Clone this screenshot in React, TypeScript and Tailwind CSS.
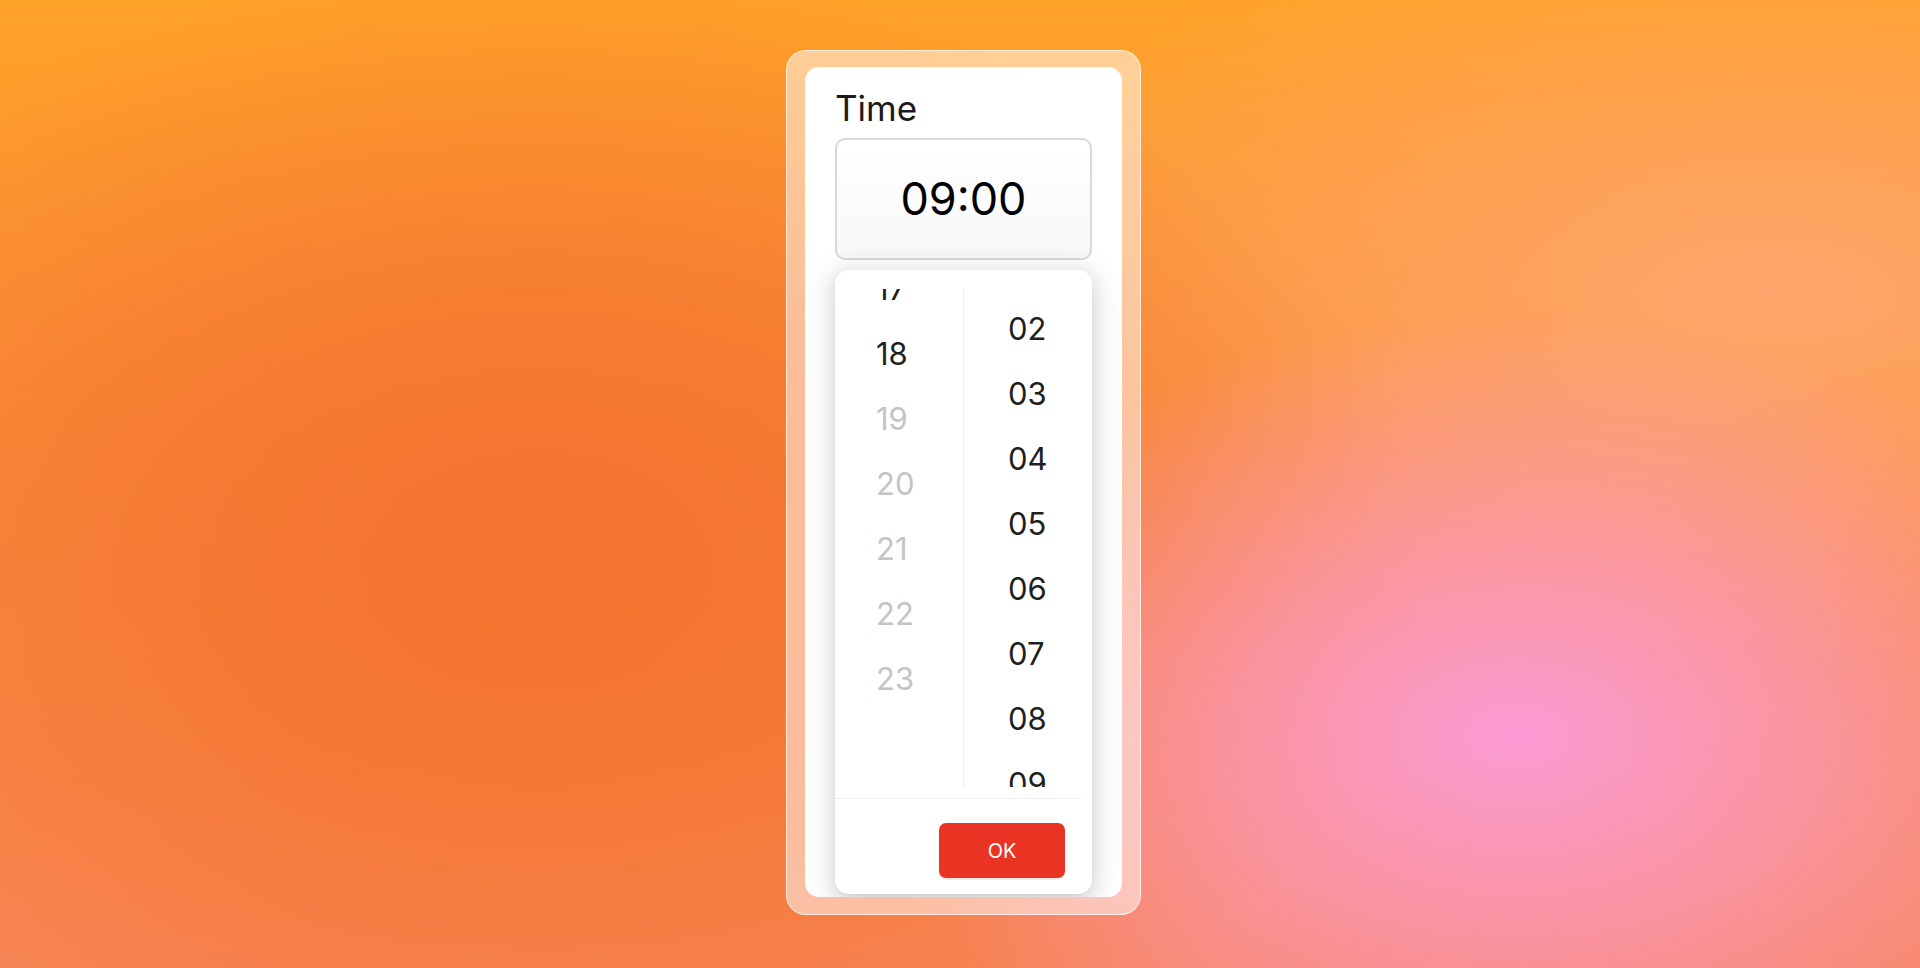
import { useLayoutEffect, useRef } from "react";

const HOURS = Array.from({ length: 24 }, (_, i) => String(i).padStart(2, "0"));
const MINUTES = Array.from({ length: 60 }, (_, i) => String(i).padStart(2, "0"));

type ColumnProps = {
  items: string[];
  scrollTo: number;
  isDisabled?: (value: string) => boolean;
  divider?: boolean;
};

// one scrollable column of the picker (hours or minutes)
function TimeColumn({ items, scrollTo, isDisabled, divider }: ColumnProps) {
  const listRef = useRef<HTMLDivElement>(null);

  useLayoutEffect(() => {
    if (listRef.current) listRef.current.scrollTop = scrollTo;
  }, [scrollTo]);

  return (
    <div
      ref={listRef}
      className={`flex-1 h-full overflow-y-auto [scrollbar-width:none] ${
        divider ? "border-l border-[#efefef]" : ""
      }`}
    >
      <ul>
        {items.map((value) => (
          <li
            key={value}
            className={`h-[65px] text-[31px] leading-[65px] cursor-pointer ${
              divider ? "pl-[44px]" : "pl-[41px]"
            } ${isDisabled?.(value) ? "text-[#c4c4c4]" : "text-[#1f1f1f]"}`}
          >
            {value}
          </li>
        ))}
      </ul>
      {/* lets the last item scroll up to the top */}
      <div className="h-[433px]" />
    </div>
  );
}

export default function App() {
  return (
    <div className="min-h-screen w-full flex justify-center pt-[50px] pl-[7px] font-[Inter,sans-serif] bg-[radial-gradient(ellipse_34%_44%_at_79%_76%,#fb9bd4_0%,rgba(251,155,212,0.6)_45%,rgba(251,155,212,0)_100%),radial-gradient(ellipse_46%_62%_at_28%_58%,#f4732f_0%,rgba(244,115,47,0.75)_40%,rgba(244,115,47,0)_100%),radial-gradient(ellipse_45%_40%_at_92%_30%,#fea66c_0%,rgba(254,166,108,0)_100%),linear-gradient(180deg,#ffa228_0%,#fa8f38_45%,#f7865a_100%)]">
      <div className="w-[355px] h-[865px] rounded-[20px] border border-white/70 bg-white/50 px-[18px] pt-[16px] pb-[17px]">
        <div className="h-[830px] rounded-[14px] bg-white overflow-hidden px-[30px] pt-[20px]">
          <label className="block text-[35px] leading-[42px] text-[#1a1a1a]">Time</label>

          <div className="mt-[9px] h-[122px] rounded-[10px] border-2 border-[#d9d9d9] bg-gradient-to-b from-white to-[#f8f8f8] flex items-center justify-center text-[45px] text-black">
            09:00
          </div>

          {/* dropdown panel */}
          <div className="mt-[10px] h-[624px] rounded-[14px] bg-white flex flex-col shadow-[0_6px_16px_0_rgba(0,0,0,0.08),0_3px_6px_-4px_rgba(0,0,0,0.12),0_9px_28px_8px_rgba(0,0,0,0.05),0_0_30px_6px_rgba(0,0,0,0.06)]">
            <div className="pt-[19px] pb-[11px]">
              <div className="flex h-[498px]">
                <TimeColumn
                  items={HOURS}
                  scrollTo={1138}
                  isDisabled={(h) => Number(h) > 18}
                />
                <TimeColumn items={MINUTES} scrollTo={123} divider />
              </div>
            </div>
            <div className="mr-[10px] border-t border-[#efefef]" />
            <div className="flex justify-end pt-[24px] pr-[27px]">
              <button className="w-[126px] h-[55px] rounded-[7px] bg-[#e93424] text-white text-[20px] shadow-[0_2px_0_rgba(255,38,5,0.1)]">
                OK
              </button>
            </div>
          </div>
        </div>
      </div>
    </div>
  );
}
